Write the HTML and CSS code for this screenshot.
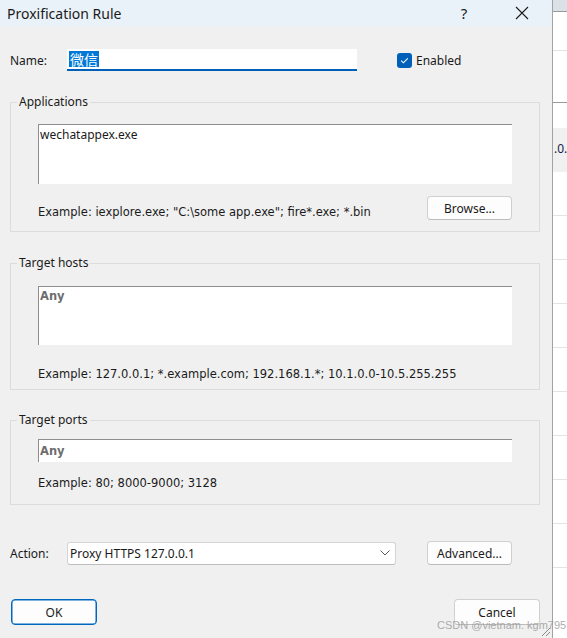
FILE: index.html
```html
<!DOCTYPE html>
<html>
<head>
<meta charset="utf-8">
<link rel="stylesheet" href="styles.css">
</head>
<body>
<div class="dialog">
  <div class="titlebar">
    <span class="title">Proxification Rule</span>
    <span class="help">?</span>
    <span class="close"><svg width="14" height="14" viewBox="0 0 14 14"><path d="M1 1L13 13M13 1L1 13" stroke="#1a1a1a" stroke-width="1.1" fill="none"/></svg></span>
  </div>

  <div class="name-row">
    <label class="lbl">Name:</label>
    <div class="name-input"><span class="sel">微信</span></div>
    <div class="check">
      <span class="box"><svg width="15" height="15" viewBox="0 0 15 15"><path d="M4.2 7.7L6.4 9.8L10.8 5.3" stroke="#fff" stroke-width="1.1" fill="none"/></svg></span>
      <span>Enabled</span>
    </div>
  </div>

  <fieldset class="group apps">
    <legend>Applications</legend>
    <div class="area tall">wechatappex.exe</div>
    <div class="ex-row">
      <span class="ex">Example: iexplore.exe; "C:\some app.exe"; fire*.exe; *.bin</span>
      <button class="btn">Browse...</button>
    </div>
  </fieldset>

  <fieldset class="group hosts">
    <legend>Target hosts</legend>
    <div class="area tall2"><span class="any">Any</span></div>
    <div class="ex ex-hosts">Example: 127.0.0.1; *.example.com; 192.168.1.*; 10.1.0.0-10.5.255.255</div>
  </fieldset>

  <fieldset class="group ports">
    <legend>Target ports</legend>
    <div class="area short"><span class="any">Any</span></div>
    <div class="ex ex-ports">Example: 80; 8000-9000; 3128</div>
  </fieldset>

  <div class="action-row">
    <label class="lbl">Action:</label>
    <div class="combo">
      <span>Proxy HTTPS 127.0.0.1</span>
      <svg width="10" height="6" viewBox="0 0 10 6"><path d="M0.5 0.5L5 5L9.5 0.5" stroke="#5a5a5a" stroke-width="1" fill="none"/></svg>
    </div>
    <button class="btn adv">Advanced...</button>
  </div>

  <div class="bottom-row">
    <button class="btn ok">OK</button>
    <button class="btn cancel">Cancel</button>
  </div>

  <svg class="grip" width="12" height="12" viewBox="0 0 12 12"><path d="M11 3L3 11M11 7L7 11" stroke="#8a8a8a" stroke-width="1" fill="none"/></svg>
</div>

<div class="side">
  <div class="s-top"></div>
  <div class="s-row s1"></div>
  <div class="s-row s2"></div>
  <div class="s-band"><span>.0.</span></div>
  <div class="s-row r"></div>
  <div class="s-row r"></div>
  <div class="s-row r"></div>
  <div class="s-row r"></div>
  <div class="s-row r"></div>
  <div class="s-row r"></div>
  <div class="s-row r"></div>
  <div class="s-row r"></div>
  <div class="s-row r"></div>
</div>

<div class="watermark">CSDN @vietnam. kgm795</div>
</body>
</html>
```

FILE: styles.css
```css
* { box-sizing: border-box; }
html, body { margin: 0; padding: 0; }
body {
  width: 567px;
  height: 638px;
  overflow: hidden;
  display: flex;
  position: relative;
  font-family: "Noto Sans", "Noto Sans CJK SC", sans-serif;
  font-size: 12px;
  color: #1a1a1a;
  background: #fff;
}
.dialog {
  width: 553px;
  height: 638px;
  background: #f0f0f0;
  border-right: 1px solid #a3a3a3;
  position: relative;
  flex-shrink: 0;
}
.titlebar {
  height: 26px;
  background: #eaf2f9;
  display: flex;
  align-items: center;
  padding-left: 7px;
}
.title { font-size: 14px; flex: 1; color: #1a1a1a; }
.help { font-size: 15px; width: 20px; margin-right: 37px; text-align: center; }
.close { width: 22px; margin-right: 19px; display: flex; align-items: center; justify-content: center; }

.lbl { width: 67px; padding-left: 10px; flex-shrink: 0; }

.name-row {
  margin-top: 23px;
  height: 22px;
  display: flex;
  align-items: center;
}
.name-input {
  width: 290px;
  height: 22px;
  background: #fff;
  border-bottom: 2px solid #005fb8;
  display: flex;
  align-items: center;
  padding-left: 2px;
}
.sel {
  background: #0078d7;
  color: #fff;
  font-family: "Noto Sans CJK SC", sans-serif;
  font-size: 14px;
  line-height: 16px;
  padding: 0 1px;
}
.check {
  margin-left: 40px;
  display: flex;
  align-items: center;
  gap: 4px;
}
.box {
  width: 15px;
  height: 15px;
  background: #005fb8;
  border-radius: 3px;
  display: flex;
}

.group {
  margin: 0 12px 0 10px;
  border: 1px solid #dcdcdc;
  padding: 0 27px;
  min-width: 0;
}
.group legend {
  padding: 0 2px;
  margin-left: -21px;
  line-height: 16px;
}
.apps { margin-top: 23px; padding-bottom: 11px; }
.hosts { margin-top: 23px; padding-bottom: 7px; }
.ports { margin-top: 22px; padding-bottom: 13px; }

.area {
  background: #fff;
  border-top: 1px solid #8e8e8e;
  border-left: 1px solid #8e8e8e;
  padding: 1px 1px;
}
.tall { height: 60px; margin-top: 14px; }
.tall2 { height: 59px; margin-top: 15px; }
.short { height: 23px; margin-top: 11px; display: flex; align-items: center; }
.any {
  font-family: "DejaVu Sans", sans-serif;
  font-weight: bold;
  font-size: 11.5px;
  color: #6d6d6d;
}
.tall2 .any { display: block; margin-top: 1px; }

.ex {
  font-family: "DejaVu Sans", sans-serif;
  font-size: 11.5px;
  line-height: 16px;
}
.ex-row {
  margin-top: 12px;
  display: flex;
  align-items: center;
  justify-content: space-between;
}
.ex-row .ex { margin-top: 8px; }
.ex-hosts { margin-top: 21px; }
.ex-ports { margin-top: 13px; }

.btn {
  font-family: "Noto Sans", sans-serif;
  font-size: 12px;
  color: #1a1a1a;
  background: #fdfdfd;
  border: 1px solid #d0d0d0;
  border-bottom-color: #bcbcbc;
  border-radius: 4px;
  height: 24px;
  width: 85px;
  padding: 0;
}

.action-row {
  margin-top: 36px;
  display: flex;
  align-items: center;
}
.combo {
  width: 329px;
  height: 23px;
  background: #fff;
  border: 1px solid #d4d4d4;
  border-bottom-color: #bdbdbd;
  border-radius: 3px;
  display: flex;
  align-items: center;
  justify-content: space-between;
  padding: 0 5px 0 2px;
}
.adv { margin-left: 31px; }

.bottom-row {
  margin-top: 34px;
  display: flex;
  justify-content: space-between;
  padding: 0 12px 0 11px;
}
.ok, .cancel { height: 26px; }
.ok { border: 1px solid #0067c0; width: 86px; box-shadow: inset 0 0 0 0.5px #0067c0; }
.cancel { width: 86px; }

.grip { position: absolute; right: 1px; bottom: 1px; }

.side { flex: 1; background: #fff; }
.s-top { height: 12px; background: #dbe1e7; border-bottom: 1px solid #9a9a9a; }
.s-row { border-bottom: 1px solid #e3e3e3; }
.s1 { height: 39px; }
.s2 { height: 52px; border-bottom-color: #9a9a9a; }
.s-band {
  margin-top: 25px;
  height: 44px;
  background: #f0f0f0;
  font-family: "Noto Sans", sans-serif;
  font-size: 12px;
  color: #1a1a4a;
  padding-top: 12px;
  padding-left: 1px;
  overflow: hidden;
  white-space: nowrap;
}
.r { height: 44px; }

.watermark {
  position: absolute;
  left: 437px;
  top: 619px;
  font-family: "Liberation Sans", sans-serif;
  font-size: 11px;
  color: rgba(150,150,150,0.8);
  white-space: nowrap;
}
```
